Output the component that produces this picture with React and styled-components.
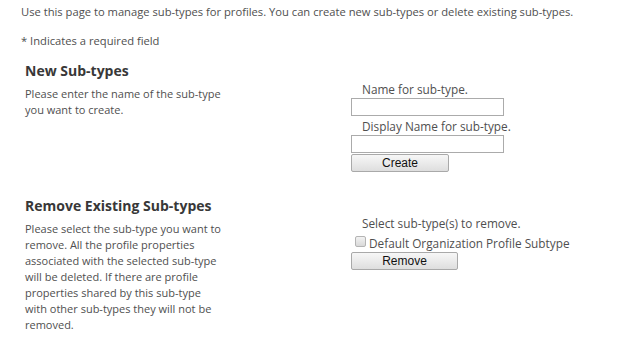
import React from "react";
import styled, { createGlobalStyle } from "styled-components";

const GlobalStyle = createGlobalStyle`
  html, body {
    margin: 0;
    padding: 0;
    background: #ffffff;
  }
  body {
    font-family: "Open Sans", "Noto Sans", sans-serif;
    font-size: 11.2px;
    color: #4f4f4f;
  }
`;

const Page = styled.div`
  width: 624px;
  height: 361px;
  padding: 4px 0 0 21px;
  box-sizing: border-box;
  overflow: hidden;
`;

const Intro = styled.p`
  margin: 0 0 13px;
  line-height: 16px;
`;

const Section = styled.section`
  display: grid;
  grid-template-columns: 198px 1fr;
  column-gap: 128px;
  margin-top: ${(p) => p.$top || 0}px;
  padding-left: 4px;
`;

const Info = styled.div`
  display: flex;
  flex-direction: column;
`;

const H3 = styled.h3`
  margin: 0 0 6px;
  font-size: 14px;
  line-height: 18px;
  font-weight: 700;
  color: #383838;
`;

const Text = styled.p`
  margin: 0;
  font-size: 11px;
  line-height: 16px;
`;

const Form = styled.div`
  display: flex;
  flex-direction: column;
  align-items: flex-start;
  padding-top: ${(p) => p.$top || 0}px;
`;

const Label = styled.label`
  display: block;
  padding-left: 11px;
  line-height: 16px;
  margin-top: ${(p) => p.$top || 0}px;
  margin-bottom: 1px;
  font-size: 11.8px;
`;

const Input = styled.input`
  width: 153px;
  height: 18px;
  box-sizing: border-box;
  border: 1px solid #ababab;
  background: #fff;
  margin: 0;
  padding: 0 2px;
`;

const Button = styled.button`
  width: ${(p) => p.$w}px;
  height: 18px;
  box-sizing: border-box;
  margin: ${(p) => p.$top || 0}px 0 0;
  padding: 0;
  border: 1px solid #a9a9a9;
  border-radius: 2px;
  background: linear-gradient(#f7f7f7, #dedede);
  font-family: "Liberation Sans", Arial, sans-serif;
  font-size: 12px;
  color: #111;
  line-height: 16px;
`;

const CheckRow = styled.label`
  display: flex;
  align-items: flex-end;
  gap: 3px;
  padding-left: 4px;
  margin-top: 4px;
  font-size: 11.8px;
  line-height: 14px;
`;

const Box = styled.span`
  width: 11px;
  height: 11px;
  box-sizing: border-box;
  border: 1px solid #b4b4b4;
  border-radius: 2px;
  background: linear-gradient(#f2f2f2, #d9d9d9);
  margin-bottom: 3px;
`;

export default function App() {
  return (
    <>
      <GlobalStyle />
      <Page>
        <Intro>
          Use this page to manage sub-types for profiles. You can create new
          sub-types or delete existing sub-types.
        </Intro>
        <Intro>* Indicates a required field</Intro>

        <Section $top={2}>
          <Info>
            <H3>New Sub-types</H3>
            <Text>
              Please enter the name of the sub-type you want to create.
            </Text>
          </Info>
          <Form $top={19}>
            <Label>Name for sub-type.</Label>
            <Input type="text" />
            <Label $top={2}>Display Name for sub-type.</Label>
            <Input type="text" />
            <Button $w={98} $top={1}>Create</Button>
          </Form>
        </Section>

        <Section $top={25}>
          <Info>
            <H3>Remove Existing Sub-types</H3>
            <Text>
              Please select the sub-type you want to remove. All the profile
              properties associated with the selected sub-type will be deleted.
              If there are profile properties shared by this sub-type with other
              sub-types they will not be removed.
            </Text>
          </Info>
          <Form $top={18}>
            <Label>Select sub-type(s) to remove.</Label>
            <CheckRow>
              <Box />
              Default Organization Profile Subtype
            </CheckRow>
            <Button $w={107} $top={2}>Remove</Button>
          </Form>
        </Section>
      </Page>
    </>
  );
}
